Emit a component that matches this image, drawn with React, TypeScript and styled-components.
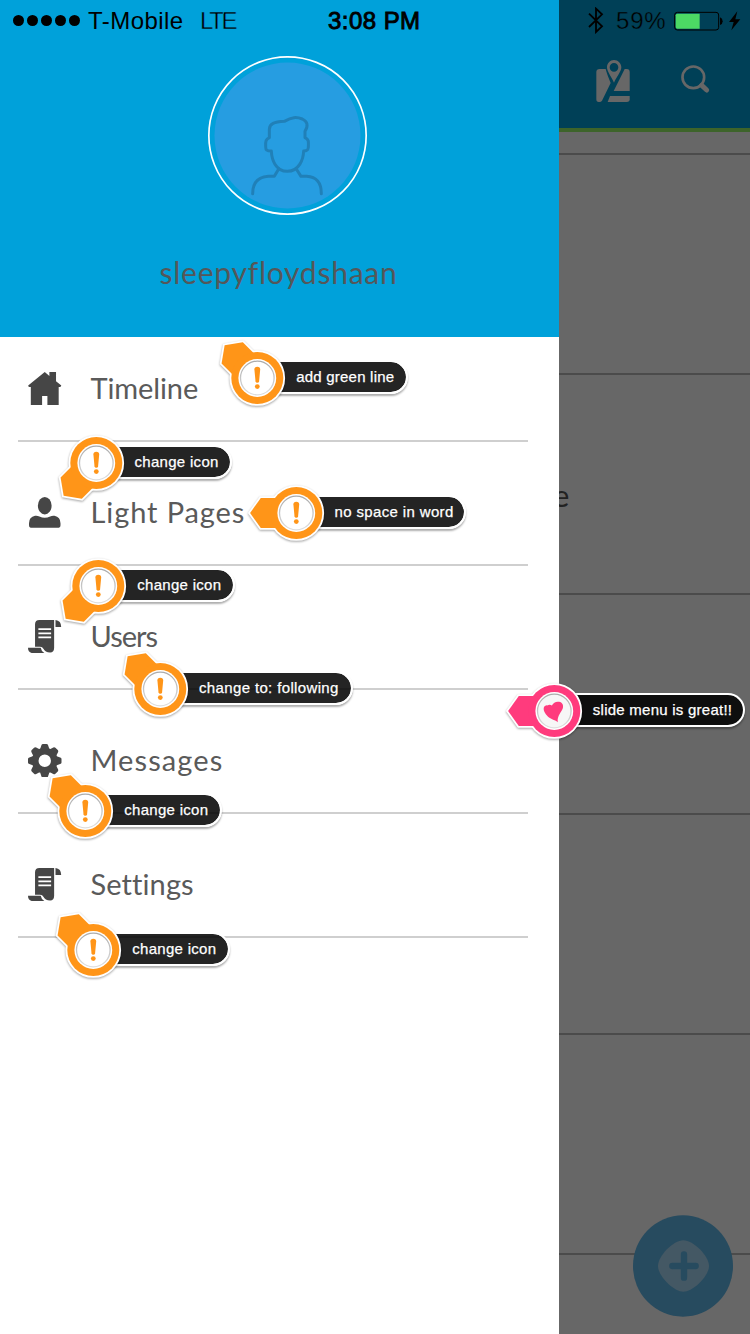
import React from "react";
import styled, { createGlobalStyle, css } from "styled-components";

const GlobalStyle = createGlobalStyle`
  *, *::before, *::after { box-sizing: border-box; }
  body { margin: 0; background: #676767; }
`;

const sans = `"Liberation Sans", Arial, sans-serif`;
const rounded = `Lato, "Open Sans", sans-serif`;

const Screen = styled.div`
  position: relative;
  display: flex;
  width: 750px;
  height: 1334px;
  overflow: hidden;
  font-family: ${sans};
`;

const Drawer = styled.aside`
  width: 559px;
  height: 100%;
  background: #fff;
`;

const ProfileHeader = styled.header`
  display: flex;
  flex-direction: column;
  align-items: center;
  height: 337px;
  background: #00a1da;
`;

const StatusLeft = styled.div`
  display: flex;
  align-items: center;
  width: 100%;
  height: 41px;
  padding-left: 13px;
  color: #000;
`;

const SignalDots = styled.div`
  display: flex;
  gap: 3px;
  margin-right: 8px;
`;

const Dot = styled.span`
  width: 11px;
  height: 11px;
  border-radius: 50%;
  background: #000;
`;

const StatusText = styled.span<{ $width: number; $gap?: number; $spacing?: number; $bold?: boolean; $thin?: string }>`
  flex: none;
  width: ${(p) => p.$width}px;
  margin-right: ${(p) => p.$gap ?? 0}px;
  font-size: 24px;
  line-height: 28px;
  white-space: nowrap;
  letter-spacing: ${(p) => p.$spacing ?? 0}px;
  ${(p) => p.$bold && css`-webkit-text-stroke: 0.9px #000;`}
  ${(p) => p.$thin && css`-webkit-text-stroke: 0.4px ${p.$thin};`}
`;

const Avatar = styled.svg`
  width: 159px;
  height: 159px;
  margin: 15px 0 0 16px;
`;

const Username = styled.div`
  margin: 39px 2px 0 0;
  font-family: ${rounded};
  font-size: 30px;
  line-height: 36px;
  letter-spacing: 0.75px;
  color: #555759;
`;

const Menu = styled.nav`
  display: flex;
  flex-direction: column;
  padding: 0 31px 0 18px;
`;

const MenuItem = styled.a`
  display: flex;
  align-items: center;
  height: 124px;
  padding: 19px 0 0 10px;
  border-bottom: 2px solid #cfcfcf;

  &:first-child {
    height: 105px;
    padding: 0 0 0 10px;
  }
`;

const MenuIcon = styled.svg`
  flex: none;
  width: 33.5px;
  height: 33.5px;
  margin-right: 29px;
  fill: #464646;
`;

const MenuLabel = styled.span<{ $spacing: number }>`
  margin-top: -2px;
  font-family: ${rounded};
  font-size: 29px;
  line-height: 36px;
  letter-spacing: ${(p) => p.$spacing}px;
  color: #5a5a5a;
`;

const Page = styled.main`
  flex: 1;
  min-width: 0;
  background: #676767;
`;

const PageHeader = styled.header`
  height: 132px;
  background: #004057;
  border-bottom: 4px solid #3d642a;
`;

const StatusRight = styled.div`
  display: flex;
  align-items: center;
  height: 41px;
  padding-left: 28px;

  svg { flex: none; }
`;

const Toolbar = styled.div`
  display: flex;
  padding: 18px 0 0 36.5px;
  gap: 50px;
`;

const Strip = styled.div`
  height: 21px;
`;

const FeedRow = styled.section`
  height: 220px;
  padding-top: 102px;
  border-top: 2px solid #4b4b4b;
  overflow: hidden;
`;

const FeedText = styled.span`
  display: block;
  margin-left: -6px;
  font-family: ${rounded};
  font-size: 31px;
  line-height: 36px;
  color: #222;
`;

const AddButton = styled.svg`
  position: absolute;
  left: 633px;
  top: 1215px;
  width: 100px;
  height: 102px;
`;

const Note = styled.div<{ $x: number; $y: number }>`
  position: absolute;
  left: ${(p) => p.$x}px;
  top: ${(p) => p.$y}px;
`;

const NoteLabel = styled.div<{ $width: number; $spacing: number }>`
  position: absolute;
  left: 10px;
  top: -18px;
  width: ${(p) => p.$width - 11}px;
  height: 34px;
  padding-left: 28.8px;
  border: 2px solid #fff;
  border-left: 0;
  border-radius: 0 17px 17px 0;
  background: rgba(0, 0, 0, 0.86);
  background-clip: padding-box;
  box-shadow: 0 2px 2px rgba(0, 0, 0, 0.32);
  color: #fff;
  font-size: 15px;
  line-height: 30px;
  letter-spacing: ${(p) => p.$spacing}px;
  -webkit-text-stroke: 0.25px #fff;
  white-space: nowrap;
`;

const Pin = styled.svg`
  position: absolute;
  left: -60px;
  top: -60px;
  width: 120px;
  height: 120px;
  filter: drop-shadow(0 1.5px 1px rgba(0, 0, 0, 0.36));
`;

const HomeIcon = () => (
  <MenuIcon viewBox="0 0 100 101">
    <path d="M50 0L64 12V0H84V28L100 41L97 45H92V101H58V72H42V101H8V45H2L0 41Z" />
  </MenuIcon>
);

const PersonIcon = () => (
  <MenuIcon viewBox="0 0 100 100">
    <ellipse cx="50" cy="29" rx="20.5" ry="26" />
    <path d="M21 59Q28 58 34 61Q50 69 66 61Q72 58 79 59Q97 63 97 81V87Q97 95 88 95H12Q3 95 3 87V81Q3 63 21 59Z" />
  </MenuIcon>
);

const ScrollIcon = () => (
  <MenuIcon viewBox="0 0 100 100">
    <path d="M34 0H78V83Q78 97 66 97Q51 97 46 86Q43 80 36 80H21V13Q21 0 34 0Z" />
    <path d="M82 0Q99 2 99 21H82Z" />
    <path d="M0 83H38Q40 95 50 99H16Q0 99 0 83Z" />
    <path d="M31 27H69M31 40H69M31 52H69" stroke="#fff" strokeWidth="5" />
  </MenuIcon>
);

const GearIcon = () => (
  <MenuIcon viewBox="-50 -50 100 100">
    <circle r="28.5" fill="none" stroke="#464646" strokeWidth="20" />
    {[0, 45, 90, 135, 180, 225, 270, 315].map((a) => (
      <path key={a} transform={`rotate(${a})`} d="M-14 -34L-10 -46Q-9 -50 -5 -50H5Q9 -50 10 -46L14 -34Z" />
    ))}
  </MenuIcon>
);

const BluetoothIcon = () => (
  <svg width="17" height="27" viewBox="0 0 51 81" fill="none" stroke="#000" strokeWidth="5.5">
    <path d="M6 20L45 58L27 75V5L45 22L6 60" />
  </svg>
);

const BatteryIcon = () => (
  <svg width="68" height="20" viewBox="0 0 204 60">
    <rect x="2" y="4" width="132" height="53" rx="8" fill="none" stroke="#000" strokeWidth="3" />
    <path d="M10 8H77V53H10Q5 53 5 48V13Q5 8 10 8Z" fill="#4cd964" />
    <path d="M138 19Q146 22 146 30.5Q146 39 138 42Z" />
    <path d="M190 1L165 33H179L172 58L199 25H184Z" />
  </svg>
);

const MapIcon = () => (
  <svg width="35" height="44" viewBox="0 0 105 132" fill="#676767">
    <path d="M11 30H29Q32 43 44 72L18 125Q15 129 11 129H8Q1 129 1 121V39Q1 30 11 30Z" />
    <path d="M86 30H92Q101 30 101 39V96H53Z" />
    <path d="M42 111H101V121Q101 129 92 129H35Z" />
    <path fillRule="evenodd" d="M54 3C42 3 33 13 33 25C33 38 47 54 54 71C61 54 76 38 76 25C76 13 66 3 54 3ZM54 12A13 13 0 1 1 54 38A13 13 0 1 1 54 12Z" />
  </svg>
);

const SearchIcon = () => (
  <svg width="30" height="44" viewBox="0 0 90 132" fill="none" stroke="#676767">
    <circle cx="37" cy="55" r="32.5" strokeWidth="8" />
    <path d="M63 80L77 93" strokeWidth="15" strokeLinecap="round" />
    <path d="M57 74L65 82" strokeWidth="8" />
  </svg>
);

const tailAngle = { left: 0, up: 45, down: -45 };

type NoteData = {
  x: number;
  y: number;
  tail: keyof typeof tailAngle;
  text: string;
  width: number;
  spacing: number;
  liked?: boolean;
};

const notes: NoteData[] = [
  { x: 257.4, y: 377.5, tail: "up", text: "add green line", width: 151.5, spacing: 0.22 },
  { x: 95.7, y: 462.5, tail: "down", text: "change icon", width: 137, spacing: 0.3 },
  { x: 295.7, y: 513.2, tail: "left", text: "no space in word", width: 171, spacing: 0.36 },
  { x: 98.4, y: 585.5, tail: "down", text: "change icon", width: 137.5, spacing: 0.3 },
  { x: 160.2, y: 689, tail: "up", text: "change to: following", width: 193.5, spacing: 0.36 },
  { x: 85.4, y: 810.5, tail: "up", text: "change icon", width: 137.5, spacing: 0.3 },
  { x: 93.4, y: 949.5, tail: "up", text: "change icon", width: 137.5, spacing: 0.3 },
  { x: 554, y: 710.6, tail: "left", text: "slide menu is great!!", width: 192, spacing: 0.25, liked: true },
];

const Annotation = ({ note }: { note: NoteData }) => {
  const color = note.liked ? "#ff3b7d" : "#ff9518";
  const tail = <path transform={`rotate(${tailAngle[note.tail]})`} d="M-46.2 0L-35.5 -15H-15V15H-35.5Z" />;
  return (
    <Note $x={note.x} $y={note.y}>
      <NoteLabel $width={note.width} $spacing={note.spacing}>{note.text}</NoteLabel>
      <Pin viewBox="-60.3 -60 120 120">
        <defs>
          <linearGradient id="rim" x1="0" y1="0" x2="0" y2="1">
            <stop offset="0" stopColor="#ababab" />
            <stop offset="1" stopColor="#dedede" />
          </linearGradient>
        </defs>
        <g fill="#fff" stroke="#fff" strokeWidth="3.6">
          {tail}
          <circle r="26" />
        </g>
        <g fill={color}>
          {tail}
          <circle r="26" />
        </g>
        <circle r="18.9" fill="#fff" />
        <circle r="16.8" fill={note.liked ? "#f7f7f7" : "#fff"} stroke="url(#rim)" strokeWidth="1.3" />
        {note.liked ? (
          <path
            fill={color}
            d="M3.5 11.2C1.5 9 -3.5 8.5 -6.5 5.5C-9.5 2.5 -11 -0.5 -10.6 -3C-10.2 -5.2 -8 -6 -6.8 -5.6C-5.5 -6.8 -3.6 -6.5 -2.4 -5.4C-1 -8.5 2 -9.8 4.8 -9.2C8 -8.6 9.3 -6 8.6 -3C7.8 0.5 2.5 4.5 3.5 11.2Z"
          />
        ) : (
          <g fill={color}>
            <path d="M-2.9 -8.5Q-2.9 -11.3 0 -11.3Q2.9 -11.3 2.9 -8.5L1.8 3.3Q1.5 4.8 0 4.8Q-1.5 4.8 -1.8 3.3Z" />
            <circle cy="8.6" r="2.4" />
          </g>
        )}
      </Pin>
    </Note>
  );
};

const menu = [
  { label: "Timeline", Icon: HomeIcon, spacing: -0.1 },
  { label: "Light Pages", Icon: PersonIcon, spacing: 0.9 },
  { label: "Users", Icon: ScrollIcon, spacing: -1 },
  { label: "Messages", Icon: GearIcon, spacing: 1.1 },
  { label: "Settings", Icon: ScrollIcon, spacing: 0.1 },
];

export default function App() {
  return (
    <Screen>
      <GlobalStyle />
      <Drawer>
        <ProfileHeader>
          <StatusLeft>
            <SignalDots>
              {[0, 1, 2, 3, 4].map((i) => <Dot key={i} />)}
            </SignalDots>
            <StatusText $width={96} $gap={16} $spacing={0.45}>T-Mobile</StatusText>
            <StatusText $width={36} $gap={92} $spacing={-2.4} $thin="#00a1da">LTE</StatusText>
            <StatusText $width={94} $spacing={0.45} $bold>3:08 PM</StatusText>
          </StatusLeft>
          <Avatar viewBox="54 48 477 477" fill="none">
            <circle cx="292.5" cy="286.5" r="236" stroke="#fff" strokeWidth="5" />
            <circle cx="292.5" cy="286.5" r="219" fill="#269de1" />
            <g stroke="#2080b8" strokeWidth="9" strokeLinecap="round" strokeLinejoin="round">
              <path d="M238 293V268C239 251 252 246 283 244C306 231 319 230 337 237C352 244 356 256 345 274V293C356 298 356 303 355 322C354 330 351 333 341 333C340 357 328 394 292 394C256 394 245 357 244 333C230 333 227 330 227 320C226 303 228 298 238 293Z" />
              <path d="M266 387L253 409H235C207 411 188 424 188 461M319 387L333 409H350C377 411 394 424 394 461" />
            </g>
          </Avatar>
          <Username>sleepyfloydshaan</Username>
        </ProfileHeader>
        <Menu>
          {menu.map(({ label, Icon, spacing }) => (
            <MenuItem key={label}>
              <Icon />
              <MenuLabel $spacing={spacing}>{label}</MenuLabel>
            </MenuItem>
          ))}
        </Menu>
      </Drawer>
      <Page>
        <PageHeader>
          <StatusRight>
            <BluetoothIcon />
            <BatteryPercent>
              <StatusText $width={58} $spacing={0.8} $thin="#004057">59%</StatusText>
            </BatteryPercent>
            <BatteryIcon />
          </StatusRight>
          <Toolbar>
            <MapIcon />
            <SearchIcon />
          </Toolbar>
        </PageHeader>
        <Strip />
        <FeedRow />
        <FeedRow>
          <FeedText>e</FeedText>
        </FeedRow>
        <FeedRow />
        <FeedRow />
        <FeedRow />
        <FeedRow />
      </Page>
      <AddButton viewBox="249 76 300 304">
        <ellipse cx="399" cy="228" rx="150" ry="152" fill="#274b5f" />
        <path fill="#445864" d="M400 151C430 151 477 198 477 228C477 258 430 305 400 305C370 305 324 258 324 228C324 198 370 151 400 151Z" />
        <path d="M402 193V263M367 228H437" stroke="#274b5f" strokeWidth="19" strokeLinecap="round" />
      </AddButton>
      {notes.map((note) => (
        <Annotation key={`${note.x}-${note.y}`} note={note} />
      ))}
    </Screen>
  );
}

const BatteryPercent = styled.div`
  flex: none;
  display: flex;
  padding-left: 12px;
`;
